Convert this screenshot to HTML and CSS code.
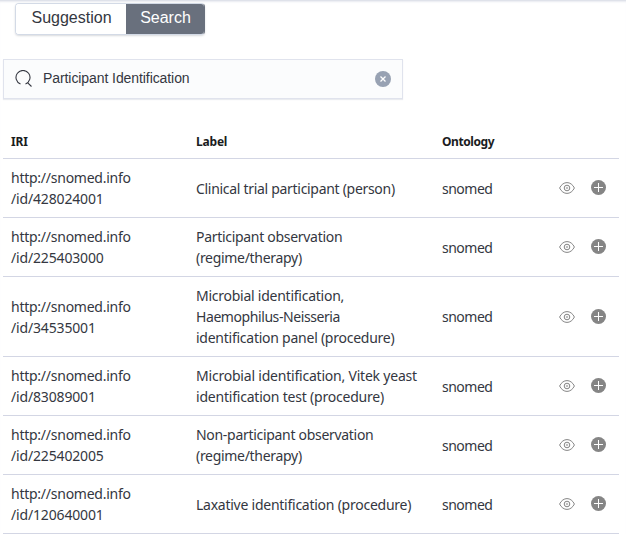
FILE: index.html
```html
<!DOCTYPE html>
<html lang="en">
<head>
<meta charset="utf-8">
<title>Ontology search</title>
<link rel="stylesheet" href="styles.css">
</head>
<body>
<svg class="sprite" aria-hidden="true">
  <symbol id="eye" viewBox="0 0 16 16"><g fill="none" stroke="currentColor"><path d="M.6 8C2.300 4.500 5 2.600 8 2.600S13.700 4.500 15.400 8C13.700 11.500 11 13.400 8 13.400S2.300 11.500.6 8Z"/><circle cx="8" cy="8" r="2.800"/><circle cx="8" cy="8" r=".8" stroke-opacity=".6"/></g></symbol>
  <symbol id="plus" viewBox="0 0 16 16"><circle cx="7.500" cy="7.500" r="7.500" fill="currentColor"/><path d="M7.500 3v9M3 7.500h9" stroke="#fff"/></symbol>
</svg>
<main class="page">
  <div class="tabs"><button class="tab">Suggestion</button><button class="tab active">Search</button></div>
  <div class="search">
    <svg class="glass" viewBox="0 0 18 18"><path d="M5.500 14A7 7 0 1 1 10.500 14M12.500 12.700l4 3.800" fill="none" stroke="#343741" stroke-width="1.100"/></svg>
    <span class="query">Participant Identification</span>
    <svg class="clear" viewBox="0 0 16 16"><circle cx="8" cy="8" r="8" fill="#98a2b3"/><path d="M5.500 5.500l5 5m0-5l-5 5" stroke="#fff" stroke-width="1.300"/></svg>
  </div>
  <table class="results">
    <colgroup><col class="c-iri"><col class="c-label"><col class="c-onto"><col></colgroup>
    <thead><tr><th>IRI</th><th>Label</th><th class="narrow">Ontology</th><th></th></tr></thead>
    <tbody>
      <tr><td>http://snomed.info<br><span class="id">/id/428024001</span></td><td class="snug">Clinical trial participant (person)</td><td class="onto">snomed</td><td><div class="actions"><svg><use href="#eye"/></svg><svg><use href="#plus"/></svg></div></td></tr>
      <tr><td>http://snomed.info<br><span class="id">/id/225403000</span></td><td class="snug">Participant observation<br>(regime/therapy)</td><td class="onto">snomed</td><td><div class="actions"><svg><use href="#eye"/></svg><svg><use href="#plus"/></svg></div></td></tr>
      <tr><td>http://snomed.info<br><span class="id">/id/34535001</span></td><td>Microbial identification,<br><span class="narrow">Haemophilus-Neisseria</span><br>identification panel (procedure)</td><td class="onto">snomed</td><td><div class="actions"><svg><use href="#eye"/></svg><svg><use href="#plus"/></svg></div></td></tr>
      <tr><td>http://snomed.info<br><span class="id">/id/83089001</span></td><td class="loose">Microbial identification, Vitek yeast<br>identification test (procedure)</td><td class="onto">snomed</td><td><div class="actions"><svg><use href="#eye"/></svg><svg><use href="#plus"/></svg></div></td></tr>
      <tr><td>http://snomed.info<br><span class="id">/id/225402005</span></td><td class="snug">Non-participant observation<br>(regime/therapy)</td><td class="onto">snomed</td><td><div class="actions"><svg><use href="#eye"/></svg><svg><use href="#plus"/></svg></div></td></tr>
      <tr><td>http://snomed.info<br><span class="id">/id/120640001</span></td><td>Laxative identification (procedure)</td><td class="onto">snomed</td><td><div class="actions"><svg><use href="#eye"/></svg><svg><use href="#plus"/></svg></div></td></tr>
    </tbody>
  </table>
</main>
</body>
</html>
```
FILE: styles.css
```css
* { box-sizing: border-box; }
body { margin: 0; background: #fff; color: #343741; font: 14px/21px "Noto Sans", sans-serif; overflow: hidden; }
.sprite { display: none; }
.page { height: 534px; border-top: 1px solid #dfe2ea; box-shadow: inset 0 2px 2px -1px #e8eaf0; padding: 2px 7px 0 3px; }
.tabs { display: flex; width: 190px; height: 32px; margin-left: 12px; border: 1px solid #d3dae6; border-right-color: #69707d; border-radius: 4px; overflow: hidden; box-shadow: 0 1px 2px rgba(105,112,125,.25); }
.tab { border: 0; padding: 0 0 3px 1px; width: 110px; background: #fff; color: #343741; font: 16px "Liberation Sans", sans-serif; }
.tab.active { width: 78px; background: #69707d; color: #fff; }
.search { display: flex; align-items: center; width: 400px; height: 40px; margin-top: 24px; padding: 0 11px; border: 1px solid #e0e3ed; background: #fbfcfd; box-shadow: 0 1px 1px rgba(152,162,179,.2); }
.glass { width: 18px; height: 18px; }
.query { flex: 1; margin-left: 10px; font: 14px/20px "Liberation Sans", sans-serif; letter-spacing: -.08px; padding-bottom: 2px; }
.clear { width: 16px; height: 16px; }
.results { width: 616px; margin-top: 26px; border-collapse: separate; border-spacing: 0; table-layout: fixed; }
.c-iri { width: 185px; }
.c-label { width: 246px; }
.c-onto { width: 117px; }
th, td { padding: 8px; text-align: left; vertical-align: middle; border-bottom: 1px solid #d3d6e4; white-space: nowrap; }
th { height: 34px; padding: 6px 8px; font-size: 12px; font-weight: 700; letter-spacing: -.2px; color: #1a1c21; }
td { letter-spacing: -.25px; }
.id { letter-spacing: -.16px; }
.snug { letter-spacing: -.3px; }
.loose { letter-spacing: -.21px; }
.narrow { letter-spacing: -.42px; }
.onto { letter-spacing: -.5px; }
td:last-child { padding-top: 9px; padding-bottom: 7px; }
.actions { display: flex; gap: 16px; height: 18px; color: #858585; }
.actions svg { width: 16px; height: 16px; }
```
